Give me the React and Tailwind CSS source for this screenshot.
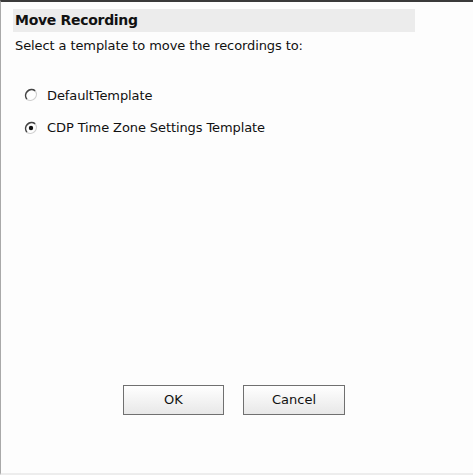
import React, { useState } from "react";

const templates = ["DefaultTemplate", "CDP Time Zone Settings Template"];

function Radio({ checked }) {
  return (
    <svg width="14" height="14" viewBox="0 0 14 14" className="shrink-0">
      <circle cx="7" cy="7" r="6" fill="#fff" />
      <path d="M11.2 2.8 A6 6 0 0 0 2.8 11.2" fill="none" stroke="#444" strokeWidth="1.6" />
      <path d="M2.8 11.2 A6 6 0 0 0 11.2 2.8" fill="none" stroke="#d0d0d0" strokeWidth="1.3" />
      {checked && <circle cx="7" cy="7" r="2.2" fill="#111" />}
    </svg>
  );
}

export default function App() {
  const [selected, setSelected] = useState(1);

  return (
    <div className="w-[473px] h-[475px] bg-[#fdfdfd] border-t-2 border-t-[#3a3a3a] border-l border-l-[#a9a9a9] border-b-2 border-b-[#ededed] flex flex-col font-['DejaVu_Sans',sans-serif] text-[13px] text-[#111]">
      <div className="mt-[7px] ml-[12px] w-[402px] h-[23px] bg-[#ececec] flex items-center pl-[2px]">
        <span className="font-bold text-[14px] tracking-[-0.3px]">Move Recording</span>
      </div>
      <p className="ml-[14px] mt-[4px] tracking-[-0.1px]">Select a template to move the recordings to:</p>

      <div className="mt-[30px] ml-[23px] flex flex-col gap-[13px]">
        {templates.map((t, i) => (
          <label key={t} className="flex items-center gap-[9px] cursor-pointer" onClick={() => setSelected(i)}>
            <Radio checked={selected === i} />
            <span className="tracking-[-0.1px]">{t}</span>
          </label>
        ))}
      </div>

      <div className="mt-auto mb-[58px] flex justify-center gap-[19px] pr-[6px]">
        <button className="w-[101px] h-[30px] border border-[#707070] bg-gradient-to-b from-white to-[#e8e8e8] text-[13px]">
          OK
        </button>
        <button className="w-[102px] h-[30px] border border-[#707070] bg-gradient-to-b from-white to-[#e8e8e8] text-[13px]">
          Cancel
        </button>
      </div>
    </div>
  );
}
